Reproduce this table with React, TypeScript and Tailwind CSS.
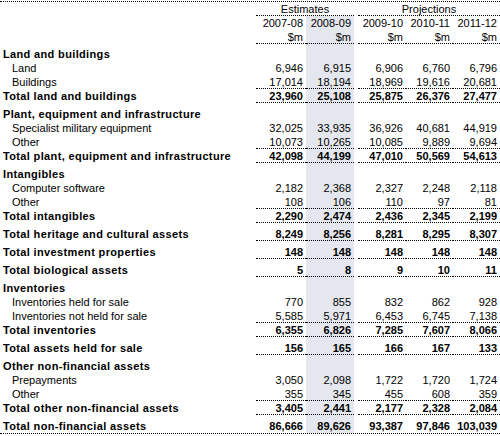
import React from "react";

type Row =
  | { kind: "head"; label: string }
  | { kind: "sub"; label: string; v: string[]; line?: boolean }
  | { kind: "total"; label: string; v: string[]; last?: boolean };

const rows: Row[] = [
  { kind: "head", label: "Land and buildings" },
  { kind: "sub", label: "Land", v: ["6,946", "6,915", "6,906", "6,760", "6,796"] },
  { kind: "sub", label: "Buildings", v: ["17,014", "18,194", "18,969", "19,616", "20,681"], line: true },
  { kind: "total", label: "Total land and buildings", v: ["23,960", "25,108", "25,875", "26,376", "27,477"] },
  { kind: "head", label: "Plant, equipment and infrastructure" },
  { kind: "sub", label: "Specialist military equipment", v: ["32,025", "33,935", "36,926", "40,681", "44,919"] },
  { kind: "sub", label: "Other", v: ["10,073", "10,265", "10,085", "9,889", "9,694"], line: true },
  { kind: "total", label: "Total plant, equipment and infrastructure", v: ["42,098", "44,199", "47,010", "50,569", "54,613"] },
  { kind: "head", label: "Intangibles" },
  { kind: "sub", label: "Computer software", v: ["2,182", "2,368", "2,327", "2,248", "2,118"] },
  { kind: "sub", label: "Other", v: ["108", "106", "110", "97", "81"], line: true },
  { kind: "total", label: "Total intangibles", v: ["2,290", "2,474", "2,436", "2,345", "2,199"] },
  { kind: "total", label: "Total heritage and cultural assets", v: ["8,249", "8,256", "8,281", "8,295", "8,307"] },
  { kind: "total", label: "Total investment properties", v: ["148", "148", "148", "148", "148"] },
  { kind: "total", label: "Total biological assets", v: ["5", "8", "9", "10", "11"] },
  { kind: "head", label: "Inventories" },
  { kind: "sub", label: "Inventories held for sale", v: ["770", "855", "832", "862", "928"] },
  { kind: "sub", label: "Inventories not held for sale", v: ["5,585", "5,971", "6,453", "6,745", "7,138"], line: true },
  { kind: "total", label: "Total inventories", v: ["6,355", "6,826", "7,285", "7,607", "8,066"] },
  { kind: "total", label: "Total assets held for sale", v: ["156", "165", "166", "167", "133"] },
  { kind: "head", label: "Other non-financial assets" },
  { kind: "sub", label: "Prepayments", v: ["3,050", "2,098", "1,722", "1,720", "1,724"] },
  { kind: "sub", label: "Other", v: ["355", "345", "455", "608", "359"], line: true },
  { kind: "total", label: "Total other non-financial assets", v: ["3,405", "2,441", "2,177", "2,328", "2,084"] },
  { kind: "total", label: "Total non-financial assets", v: ["86,666", "89,626", "93,387", "97,846", "103,039"], last: true },
];

const widths = ["w-[50px]", "w-[48px]", "w-[48px]", "w-[47px]", "w-[47px]"];
const shade = "bg-[#e4e7ed]";

function Cells({ v, line, bold }: { v: string[]; line?: boolean; bold?: boolean }) {
  return (
    <>
      {v.map((n, i) => (
        <React.Fragment key={i}>
          {i === 2 && <div className="w-[4px] shrink-0" />}
          <div
            className={`${widths[i]} shrink-0 text-right pr-[3px] box-border ${
              i === 1 ? shade : ""
            } ${line ? "border-b border-dotted border-black" : ""} ${bold ? "font-bold" : ""}`}
          >
            {n}
          </div>
        </React.Fragment>
      ))}
    </>
  );
}

function Gap({ h }: { h: string }) {
  return (
    <div className={`flex ${h}`}>
      <div className="w-[256px] shrink-0" />
      <div className="w-[50px] shrink-0" />
      <div className={`w-[48px] shrink-0 ${shade}`} />
    </div>
  );
}

export default function App() {
  return (
    <div className="w-[500px] h-[436px] bg-white pt-px text-black text-[11px] leading-[14px] font-['Liberation_Sans',Arial,sans-serif]">
      <div className="border-t border-dotted border-black">
        <div className="flex h-[14px]">
          <div className="w-[256px] shrink-0" />
          <div className="w-[98px] shrink-0 text-center border-b border-dotted border-black">Estimates</div>
          <div className="w-[4px] shrink-0" />
          <div className="w-[142px] shrink-0 text-center border-b border-dotted border-black">Projections</div>
        </div>
        <div className="flex h-[14px]">
          <div className="w-[256px] shrink-0" />
          <Cells v={["2007-08", "2008-09", "2009-10", "2010-11", "2011-12"]} />
        </div>
        <div className="flex h-[14px]">
          <div className="w-[256px] shrink-0" />
          <Cells v={["$m", "$m", "$m", "$m", "$m"]} line />
        </div>
        <Gap h="h-[3px]" />
        {rows.map((r, idx) => {
          if (r.kind === "head") {
            return (
              <div key={idx} className="flex h-[14px]">
                <div className="w-[256px] shrink-0 pl-[3px] font-bold tracking-[0.35px]">{r.label}</div>
                <div className="w-[50px] shrink-0" />
                <div className={`w-[48px] shrink-0 ${shade}`} />
              </div>
            );
          }
          if (r.kind === "sub") {
            return (
              <div key={idx} className="flex h-[14px]">
                <div className="w-[256px] shrink-0 pl-[12px]">{r.label}</div>
                <Cells v={r.v} line={r.line} />
              </div>
            );
          }
          return (
            <React.Fragment key={idx}>
              <div className={`flex h-[14px] ${r.last ? "border-b border-dotted border-black box-content" : ""}`}>
                <div className="w-[256px] shrink-0 pl-[3px] font-bold tracking-[0.35px]">{r.label}</div>
                <Cells v={r.v} line={!r.last} bold />
              </div>
              {!r.last && <Gap h="h-[4px]" />}
            </React.Fragment>
          );
        })}
      </div>
    </div>
  );
}
